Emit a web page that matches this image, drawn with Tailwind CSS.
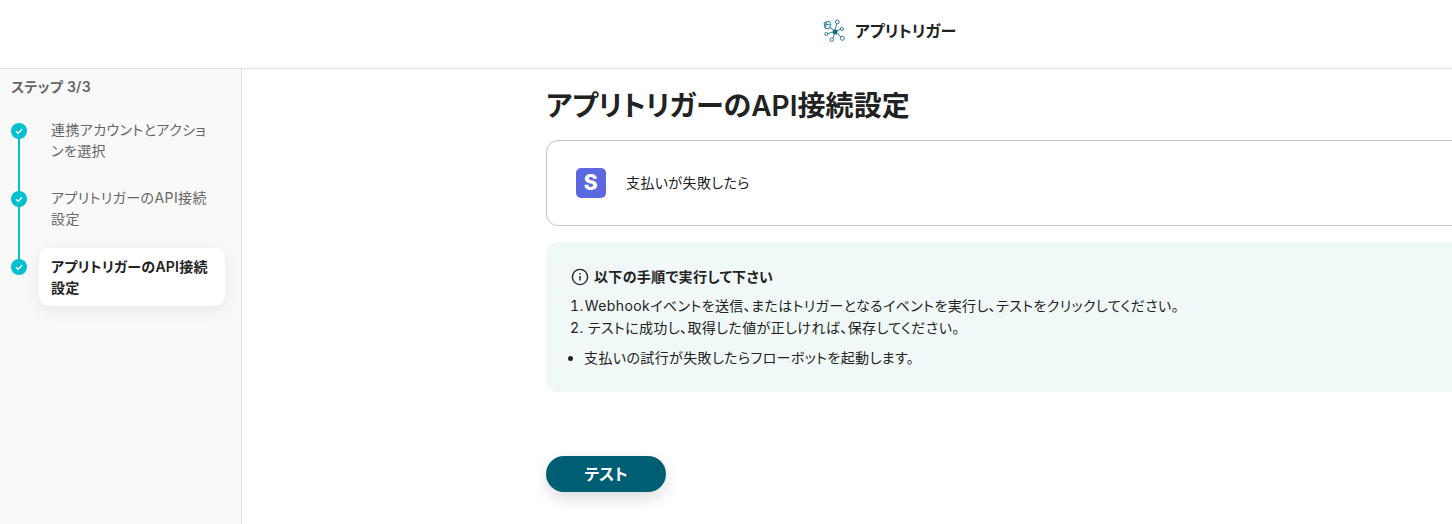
<!DOCTYPE html>
<html lang="ja">
<head>
    <meta charset="UTF-8">
    <title>アプリトリガーのAPI接続設定</title>
    <script src="https://cdn.jsdelivr.net/npm/@tailwindcss/browser@4"></script>
</head>
<body class="h-[524px] w-[1452px] overflow-hidden bg-white font-['Inter','Noto_Sans_CJK_JP',sans-serif] text-[#222222] [font-feature-settings:'palt']">
    <!-- ヘッダー -->
    <header class="flex h-[69px] items-center justify-center gap-[9px] border-b border-[#e0e0e0] pl-[326px] pb-[6px]">
        <svg class="h-[24px] w-[24px]" viewBox="0 0 24 24" fill="none" stroke="#2a7f93" stroke-width="1">
            <path d="M2 4l5 -2l2 4l-2 4l-4 -1z" />
            <path d="M4.500 2.500l-1 6.500M2.500 5l6 1" />
            <circle cx="15.300" cy="2.900" r="1.900" />
            <circle cx="19.800" cy="10" r="1.500" />
            <circle cx="20.300" cy="19.300" r="2" />
            <circle cx="9.700" cy="20.700" r="1.700" />
            <circle cx="4.300" cy="15" r="1.500" />
            <path d="M8 8l4 4M14.800 4.800l-1.500 6M18.300 10.300l-4.300 2M11 19.200l1.500 -5M18.800 18l-4.500 -4.500M5.800 14.700l5.500 -2" />
            <rect x="11" y="10.600" width="4.400" height="4.400" fill="#1a6a80" stroke="none" transform="rotate(20 13 12.700)" />
        </svg>
        <span class="text-base font-semibold">アプリトリガー</span>
    </header>

    <div class="flex h-[455px] tracking-[0.4px]">
        <!-- サイドバー -->
        <aside class="w-[242px] shrink-0 border-r border-[#e0e0e0] bg-[#f9f9f9] pl-[11px] pt-[8px]">
            <p class="text-sm leading-[20px] font-semibold tracking-[0.3px] text-[#666666]">ステップ 3/3</p>
            <ol class="relative mt-[18px] flex flex-col gap-[16px]">
                <div class="absolute top-[10px] left-[7px] h-[136px] w-[2px] bg-[#00bfd0]"></div>
                <li class="relative flex items-start">
                    <span class="mt-[8px] flex h-4 w-4 items-center justify-center rounded-full bg-[#00c0cf]">
                        <svg class="h-2.5 w-2.5" viewBox="0 0 10 10" fill="none" stroke="white" stroke-width="1.400"><path d="M2 5.200l2.200 2l3.800 -4" /></svg>
                    </span>
                    <p class="ml-[12px] w-[186px] px-3 pt-[4px] pb-[6px] text-sm leading-[21px] text-[#666666]">連携アカウントとアクションを選択</p>
                </li>
                <li class="relative flex items-start">
                    <span class="mt-[8px] flex h-4 w-4 items-center justify-center rounded-full bg-[#00c0cf]">
                        <svg class="h-2.5 w-2.5" viewBox="0 0 10 10" fill="none" stroke="white" stroke-width="1.400"><path d="M2 5.200l2.200 2l3.800 -4" /></svg>
                    </span>
                    <p class="ml-[12px] w-[186px] px-3 pt-[4px] pb-[6px] text-sm leading-[21px] text-[#666666]">アプリトリガーのAPI接続設定</p>
                </li>
                <li class="relative flex items-start">
                    <span class="mt-[8px] flex h-4 w-4 items-center justify-center rounded-full bg-[#00c0cf]">
                        <svg class="h-2.5 w-2.5" viewBox="0 0 10 10" fill="none" stroke="white" stroke-width="1.400"><path d="M2 5.200l2.200 2l3.800 -4" /></svg>
                    </span>
                    <p class="ml-[12px] -mt-[3px] w-[186px] rounded-[10px] bg-white px-3 py-2 text-sm leading-[21px] font-semibold tracking-[0.25px] text-[#222222] shadow-[0_4px_16px_rgba(0,0,0,0.08)]">アプリトリガーのAPI接続設定</p>
                </li>
            </ol>
        </aside>

        <!-- メイン -->
        <main class="min-w-0 flex-1 overflow-hidden pl-[304px]">
            <h1 class="pt-[18px] pb-[1px] text-[28px] leading-[38px] font-semibold tracking-[0.05px]">アプリトリガーのAPI接続設定</h1>
            <div class="mt-[14px] flex h-[86px] w-[1000px] items-center gap-[20px] rounded-[12px] border border-[#c4c4c4] pl-[29px]">
                <div class="flex h-[30px] w-[30px] items-center justify-center rounded-[5px] bg-[#5b68df] text-[21px] font-extrabold text-white">S</div>
                <span class="pb-[1px] text-sm">支払いが失敗したら</span>
            </div>
            <section class="mt-[16px] h-[150px] w-[1000px] rounded-[12px] bg-[#f0f9f8] pt-[24px] pl-[24px] text-sm leading-[22px]">
                <p class="ml-[1px] flex items-center gap-[5px] font-semibold tracking-[0.35px]">
                    <svg class="h-[18px] w-[18px]" viewBox="0 0 18 18" fill="none" stroke="#222222" stroke-width="1.400"><circle cx="9" cy="9" r="7.600" /><path d="M9 8v4.500M9 5v1.400" /></svg>
                    以下の手順で実行して下さい
                </p>
                <ol class="mt-[7px] list-inside list-decimal">
                    <li><span class="-ml-[3px]">Webhookイベントを送信、またはトリガーとなるイベントを実行し、テストをクリックしてください。</span></li>
                    <li>テストに成功し、取得した値が正しければ、保存してください。</li>
                </ol>
                <ul class="mt-[8px] list-disc pl-[14px]">
                    <li>支払いの試行が失敗したらフローボットを起動します。</li>
                </ul>
            </section>
            <button class="mt-[64px] h-[36px] w-[120px] rounded-full bg-[#005e74] text-base font-semibold tracking-normal text-white shadow-[0_6px_16px_rgba(0,0,0,0.14)]">テスト</button>
        </main>
    </div>
</body>
</html>
